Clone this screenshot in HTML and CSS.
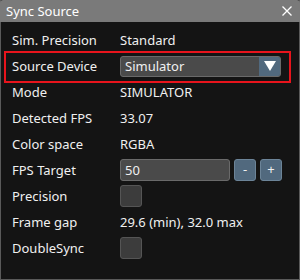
FILE: index.html
```html
<!DOCTYPE html>
<html lang="en">
<head>
  <meta charset="UTF-8">
  <title>Sync Source</title>
  <link rel="stylesheet" href="styles.css">
</head>
<body>
  <div class="window">
    <div class="titlebar">
      <span class="title">Sync Source</span>
      <svg class="close" width="10" height="10" viewBox="0 0 10 10">
        <path d="M0.5 0.5 L9.5 9.5 M9.5 0.5 L0.5 9.5" stroke="#fff" stroke-width="1.3"/>
      </svg>
    </div>
    <div class="content">
      <div class="row">
        <span class="label">Sim. Precision</span>
        <span class="value">Standard</span>
      </div>
      <div class="row highlight">
        <span class="label">Source Device</span>
        <div class="combo">
          <span class="combo-text">Simulator</span>
          <span class="combo-arrow">
            <svg width="12" height="10" viewBox="0 0 12 10"><path d="M0 0 H12 L6 10 Z" fill="#fff"/></svg>
          </span>
        </div>
      </div>
      <div class="row">
        <span class="label">Mode</span>
        <span class="value">SIMULATOR</span>
      </div>
      <div class="row">
        <span class="label">Detected FPS</span>
        <span class="value">33.07</span>
      </div>
      <div class="row">
        <span class="label">Color space</span>
        <span class="value">RGBA</span>
      </div>
      <div class="row">
        <span class="label">FPS Target</span>
        <div class="stepper">
          <span class="input">50</span>
          <span class="btn">-</span>
          <span class="btn">+</span>
        </div>
      </div>
      <div class="row">
        <span class="label">Precision</span>
        <span class="check"></span>
      </div>
      <div class="row">
        <span class="label">Frame gap</span>
        <span class="value">29.6 (min), 32.0 max</span>
      </div>
      <div class="row">
        <span class="label">DoubleSync</span>
        <span class="check"></span>
      </div>
    </div>
  </div>
</body>
</html>
```

FILE: styles.css
```css
body {
  margin: 0;
  background: #141414;
  font-family: "Noto Sans", "Open Sans", sans-serif;
  font-size: 13px;
  color: #f0f0f0;
}
.window {
  width: 300px;
  height: 280px;
  box-sizing: border-box;
  border: 1px solid #5a5a5a;
  border-top: none;
  background: #141414;
}
.titlebar {
  height: 22px;
  margin: 0 -1px;
  background: #7a7a7a;
  border-radius: 3px 3px 0 0;
  display: flex;
  align-items: center;
  justify-content: space-between;
  padding: 0 8px 0 6px;
}
.title {
  color: #fff;
  font-size: 13px;
}
.close {
  display: block;
}
.content {
  padding-top: 5px;
}
.row {
  display: grid;
  grid-template-columns: 108px 1fr;
  align-items: center;
  height: 26px;
  padding-left: 11px;
  position: relative;
}
.highlight::after {
  content: "";
  position: absolute;
  left: 3px;
  right: 8px;
  top: -2px;
  bottom: -4px;
  border: 2px solid #e8141c;
}
.combo {
  display: flex;
  width: 161px;
  height: 21px;
  box-sizing: border-box;
  border: 1px solid #6a6a6a;
  border-radius: 3px;
  background: #4a4a4a;
  overflow: hidden;
}
.combo-text {
  flex: 1;
  padding-left: 4px;
  line-height: 19px;
}
.combo-arrow {
  width: 21px;
  background: #51697e;
  display: flex;
  align-items: center;
  justify-content: center;
}
.stepper {
  display: flex;
  gap: 4px;
}
.input {
  width: 110px;
  height: 22px;
  box-sizing: border-box;
  border: 1px solid #6a6a6a;
  border-radius: 3px;
  background: #4a4a4a;
  padding-left: 4px;
  line-height: 20px;
}
.btn {
  width: 22px;
  height: 22px;
  box-sizing: border-box;
  border: 1px solid #6c8498;
  border-radius: 3px;
  background: #51697e;
  text-align: center;
  line-height: 19px;
  font-size: 13px;
}
.check {
  width: 22px;
  height: 22px;
  box-sizing: border-box;
  border: 1px solid #555;
  border-radius: 3px;
  background: #3c3c3c;
}
```
